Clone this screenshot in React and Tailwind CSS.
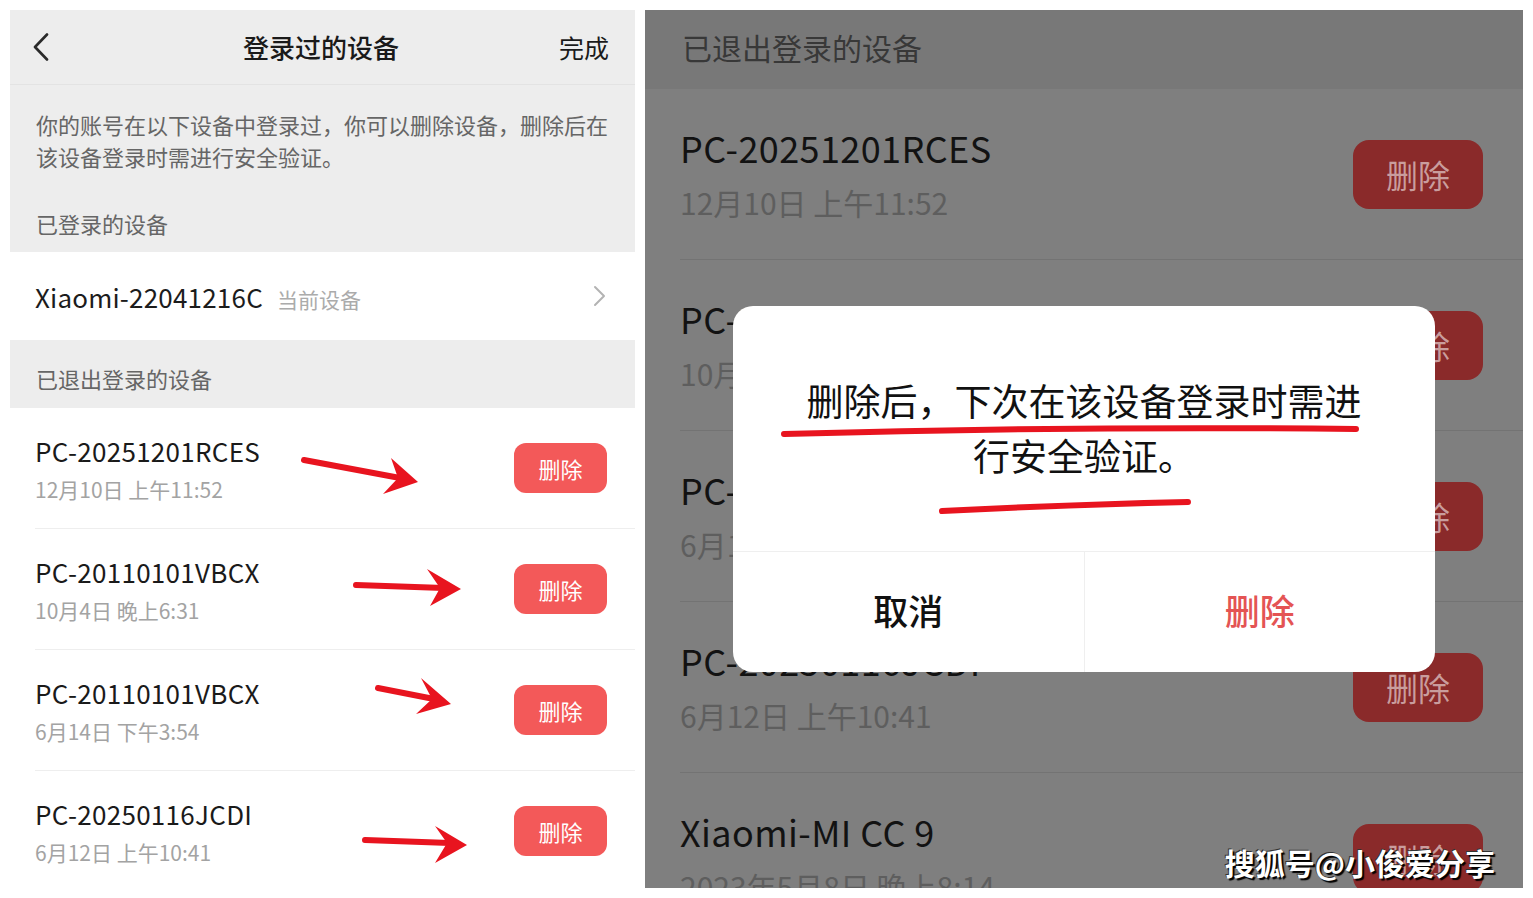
import React from "react";

const leftRows = [
  { name: "PC-20251201RCES", date: "12月10日 上午11:52" },
  { name: "PC-20110101VBCX", date: "10月4日 晚上6:31" },
  { name: "PC-20110101VBCX", date: "6月14日 下午3:54" },
  { name: "PC-20250116JCDI", date: "6月12日 上午10:41" },
];

const rightRows = [
  { name: "PC-20251201RCES", date: "12月10日 上午11:52" },
  { name: "PC-20110101VBCX", date: "10月4日 晚上6:31" },
  { name: "PC-20110101VBCX", date: "6月14日 下午3:54" },
  { name: "PC-20250116JCDI", date: "6月12日 上午10:41" },
  { name: "Xiaomi-MI CC 9", date: "2023年5月8日 晚上8:14" },
];

function Arrow({ s, e, tip, w1, notch, w2 }) {
  return (
    <g>
      <line x1={s[0]} y1={s[1]} x2={e[0]} y2={e[1]} stroke="#e8141f" strokeWidth="6" strokeLinecap="round" />
      <polygon points={`${tip[0]},${tip[1]} ${w1[0]},${w1[1]} ${notch[0]},${notch[1]} ${w2[0]},${w2[1]}`} fill="#e8141f" />
    </g>
  );
}

export default function App() {
  return (
    <div className="relative w-[1533px] h-[898px] bg-white flex gap-[10px] p-[10px] font-['Noto_Sans_CJK_SC','Noto_Sans',sans-serif] overflow-hidden">
      {/* Left panel */}
      <div className="w-[625px] h-[878px] shrink-0 bg-white flex flex-col overflow-hidden">
        <div className="h-[75px] shrink-0 bg-[#ededed] border-b border-[#e3e3e3] flex items-center pl-[23px] pr-[26px]">
          <div className="w-[70px] flex items-center">
            <svg width="16" height="28" viewBox="0 0 16 28">
              <polyline points="14,1.5 2,14 14,26.5" fill="none" stroke="#2a2a2a" strokeWidth="2.6" strokeLinecap="round" strokeLinejoin="round" />
            </svg>
          </div>
          <div className="flex-1 text-center text-[26px] font-medium text-[#1a1a1a] leading-[34px]">登录过的设备</div>
          <div className="w-[70px] text-right text-[25px] text-[#1a1a1a] leading-[34px]">完成</div>
        </div>
        <div className="h-[167px] shrink-0 bg-[#ededed] px-[26px] pt-[23px] text-[22px] text-[#666666]">
          <div className="leading-[32px] whitespace-nowrap">你的账号在以下设备中登录过，你可以删除设备，删除后在</div>
          <div className="leading-[32px] whitespace-nowrap">该设备登录时需进行安全验证。</div>
          <div className="leading-[32px] mt-[35px]">已登录的设备</div>
        </div>
        <div className="h-[88px] shrink-0 flex items-center justify-between pl-[25px] pr-[28px]">
          <div className="flex items-baseline">
            <span className="text-[26px] text-[#1c1c1c] tracking-[0.2px]">Xiaomi-22041216C</span>
            <span className="ml-[14px] text-[21px] text-[#ababab]">当前设备</span>
          </div>
          <svg width="14" height="22" viewBox="0 0 14 22">
            <polyline points="2,2 11,11 2,20" fill="none" stroke="#b3b3b3" strokeWidth="2" strokeLinecap="round" strokeLinejoin="round" />
          </svg>
        </div>
        <div className="h-[68px] shrink-0 bg-[#ededed] pl-[26px] pt-[22px] text-[22px] leading-[32px] text-[#666666]">已退出登录的设备</div>
        <div className="ml-[25px] flex flex-col">
          {leftRows.map((r, i) => (
            <div key={i} className="h-[121px] shrink-0 border-b border-[#eeeeee] flex justify-between items-center pr-[28px]">
              <div className="self-start pt-[27px] flex flex-col">
                <div className="text-[26px] leading-[32px] text-[#1a1a1a] tracking-[0.3px]">{r.name}</div>
                <div className="mt-[9px] text-[21px] leading-[26px] text-[#a3a3a3]">{r.date}</div>
              </div>
              <div className="w-[93px] h-[50px] rounded-[12px] bg-[#f35959] text-white text-[22px] flex items-center justify-center">删除</div>
            </div>
          ))}
        </div>
      </div>

      {/* Right panel */}
      <div className="relative w-[878px] h-[878px] shrink-0 bg-[#7f7f7f] overflow-hidden flex flex-col">
        <div className="h-[79px] shrink-0 bg-[#787878] flex items-center pl-[37px] pb-[4px] text-[30px] text-[#383838]">已退出登录的设备</div>
        <div className="ml-[35px] flex flex-col">
          {rightRows.map((r, i) => (
            <div key={i} className="h-[171px] shrink-0 border-b border-[#737373] flex justify-between items-center pr-[40px]">
              <div className="self-start pt-[36px] flex flex-col">
                <div className="text-[36px] leading-[44px] text-[#121212] tracking-[0.4px]">{r.name}</div>
                <div className="mt-[14px] text-[30px] leading-[38px] text-[#5e5e5e]">{r.date}</div>
              </div>
              <div className="w-[130px] h-[69px] rounded-[16px] bg-[#8a2a2a] text-[#c99d9d] text-[32px] flex items-center justify-center">删除</div>
            </div>
          ))}
        </div>

        {/* Dialog */}
        <div className="absolute left-[88px] top-[296px] w-[702px] h-[366px] rounded-[20px] bg-white flex flex-col overflow-hidden">
          <div className="h-[245px] shrink-0 pt-[67px] text-center text-[37px] leading-[55px] text-[#111111]">
            <div className="whitespace-nowrap">删除后，下次在该设备登录时需进</div>
            <div className="whitespace-nowrap">行安全验证。</div>
          </div>
          <div className="flex-1 border-t border-[#efefef] flex">
            <div className="flex-1 border-r border-[#efefef] flex items-center justify-center pb-[3px] text-[35px] font-medium text-[#111111]">取消</div>
            <div className="flex-1 flex items-center justify-center pb-[3px] text-[35px] font-medium text-[#e45454]">删除</div>
          </div>
        </div>
      </div>

      {/* Annotations */}
      <svg className="absolute left-0 top-0 pointer-events-none" width="1533" height="898" viewBox="0 0 1533 898">
        <Arrow s={[304, 460]} e={[400, 478]} tip={[418, 482]} w1={[391, 458]} notch={[398, 478]} w2={[383, 494]} />
        <Arrow s={[356, 585]} e={[444, 588]} tip={[461, 589]} w1={[427, 569]} notch={[440, 588]} w2={[430, 606]} />
        <Arrow s={[378, 688]} e={[434, 699]} tip={[451, 704]} w1={[421, 678]} notch={[432, 699]} w2={[416, 714]} />
        <Arrow s={[365, 840]} e={[450, 843]} tip={[467, 845]} w1={[435, 826]} notch={[447, 843]} w2={[435, 863]} />
        <path d="M784 434 Q1070 426 1356 429" fill="none" stroke="#e8141f" strokeWidth="6" strokeLinecap="round" />
        <path d="M942 511 Q1060 505 1188 502" fill="none" stroke="#e8141f" strokeWidth="6" strokeLinecap="round" />
      </svg>

      <div className="absolute right-[38px] bottom-[18px] text-[30px] leading-[36px] font-bold text-white [text-shadow:2px_2px_1px_#000,-1px_-1px_0_#333] whitespace-nowrap">搜狐号@小俊爱分享</div>
    </div>
  );
}
